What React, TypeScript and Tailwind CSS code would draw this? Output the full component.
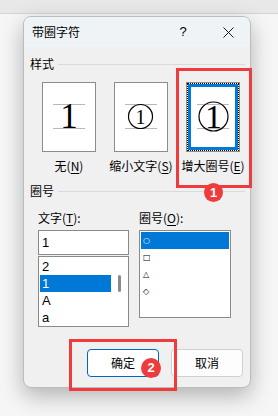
import React from "react";

const cjk = "font-['Microsoft_YaHei','Noto_Sans_CJK_SC',sans-serif]";

function U({ children }: { children: React.ReactNode }) {
  return <span className="underline underline-offset-2">{children}</span>;
}

function Preview({ kind, selected }: { kind: "none" | "small" | "big"; selected?: boolean }) {
  return (
    <div className="relative w-[54px] h-[70px] bg-white border border-[#8c8c8c]">
      {selected && (
        <div className="absolute inset-0 border border-dotted border-black">
          <div className="h-full w-full border-[3px] border-[#0078d7]" />
        </div>
      )}
      <svg
        className="absolute left-[-1px] top-[-1px]"
        width={54}
        height={70}
        viewBox="0 0 54 70"
      >
        <line x1={11} y1={22.5} x2={43} y2={22.5} stroke="#b8b8b8" strokeWidth={1} />
        <line x1={11} y1={46.5} x2={43} y2={46.5} stroke="#b8b8b8" strokeWidth={1} />
        {kind === "none" && (
          <text x={27} y={46} textAnchor="middle" fontSize={35} fontFamily="Liberation Serif, serif">
            1
          </text>
        )}
        {kind === "small" && (
          <>
            <circle cx={26.5} cy={34.5} r={12} fill="none" stroke="#000" strokeWidth={1.2} />
            <text x={26.5} y={41.5} textAnchor="middle" fontSize={20} fontFamily="Liberation Serif, serif">
              1
            </text>
          </>
        )}
        {kind === "big" && (
          <>
            <circle cx={27.5} cy={34.5} r={14.5} fill="none" stroke="#000" strokeWidth={1.2} />
            <text x={27.5} y={46} textAnchor="middle" fontSize={34} fontFamily="Liberation Serif, serif">
              1
            </text>
          </>
        )}
      </svg>
    </div>
  );
}

function Badge({ n, className }: { n: number; className: string }) {
  return (
    <div
      className={`absolute flex items-center justify-center rounded-full bg-[#ee3b3b] text-white font-bold text-[13px] font-['Liberation_Sans',sans-serif] ${className}`}
    >
      {n}
    </div>
  );
}

export default function App() {
  const chars = ["2", "1", "A", "a"];
  const rings = ["○", "□", "△", "◇"];

  return (
    <div className={`relative w-[278px] h-[416px] overflow-hidden bg-[#f6f6f6] text-black ${cjk}`}>
      <div className="h-[14px] bg-[#e8e8e8] border-b border-[#d4d4d4]" />

      {/* dialog */}
      <div className="ml-[23px] mt-[2px] w-[228px] h-[372px] rounded-[8px] border border-[#bcbcbc] bg-[#f0f0f0] shadow-[0_8px_22px_rgba(0,0,0,0.28)] overflow-hidden flex flex-col">
        <div className="h-[30px] shrink-0 bg-[#eef3f6] flex items-center pl-[8px] pr-[7px] text-[12px]">
          <span>带圈字符</span>
          <span className="ml-auto w-[30px] text-center text-[13px] font-['Liberation_Sans',sans-serif]">?</span>
          <span className="ml-[15px] w-[30px] flex justify-center">
            <svg width={11} height={11} viewBox="0 0 11 11">
              <path d="M0.5 0.5 L10.5 10.5 M10.5 0.5 L0.5 10.5" stroke="#1a1a1a" strokeWidth={1} />
            </svg>
          </span>
        </div>

        {/* 样式 */}
        <div className="mt-[9px] flex items-center pl-[6px] pr-[5px] text-[12px] leading-[16px]">
          <span>样式</span>
          <div className="ml-[4px] flex-1 border-t border-[#dadada]" />
        </div>
        <div className="mt-[10px] pl-[18px] flex gap-[18px] text-[12px]">
          <div className="w-[54px] flex flex-col items-center">
            <Preview kind="none" />
            <span className="mt-[6px] leading-[16px] whitespace-nowrap">
              无(<U>N</U>)
            </span>
          </div>
          <div className="w-[54px] flex flex-col items-center">
            <Preview kind="small" />
            <span className="mt-[6px] leading-[16px] whitespace-nowrap">
              缩小文字(<U>S</U>)
            </span>
          </div>
          <div className="w-[54px] flex flex-col items-center">
            <Preview kind="big" selected />
            <span className="mt-[6px] leading-[16px] whitespace-nowrap">
              增大圈号(<U>E</U>)
            </span>
          </div>
        </div>

        {/* 圈号 */}
        <div className="mt-[9px] flex items-center pl-[6px] pr-[5px] text-[12px] leading-[16px]">
          <span>圈号</span>
          <div className="ml-[4px] flex-1 border-t border-[#dadada]" />
        </div>

        <div className="mt-[11px] pl-[14px] flex gap-[10px] text-[12px]">
          <div className="w-[91px] flex flex-col">
            <span className="leading-[16px] whitespace-nowrap">
              文字(<U>T</U>):
            </span>
            <div className="mt-[4px] h-[25px] bg-white border border-[#8a8a8a] flex items-center pl-[3px] font-['Liberation_Sans',sans-serif] text-[13px]">
              1
            </div>
            <div className="mt-px h-[71px] bg-white border border-[#8a8a8a] flex overflow-hidden">
              <div className="w-[72px] pl-px pt-px flex flex-col font-['Liberation_Sans',sans-serif] text-[13px]">
                {chars.map((c) => (
                  <div
                    key={c}
                    className={`h-[17px] shrink-0 flex items-center pl-[2px] ${c === "1" ? "bg-[#0078d7] text-white" : ""}`}
                  >
                    {c}
                  </div>
                ))}
              </div>
              <div className="flex-1 flex justify-center pt-[18px]">
                <div className="w-[3px] h-[17px] rounded-full bg-[#8a8a8a]" />
              </div>
            </div>
          </div>

          <div className="w-[92px] flex flex-col">
            <span className="leading-[16px] whitespace-nowrap">
              圈号(<U>O</U>):
            </span>
            <div className="mt-[4px] h-[88px] bg-white border border-[#8a8a8a] p-px flex flex-col font-['DejaVu_Sans',sans-serif] text-[8px]">
              {rings.map((r, i) => (
                <div
                  key={r}
                  className={`h-[17px] shrink-0 flex items-center pl-[2px] ${i === 0 ? "bg-[#0078d7] text-white" : ""}`}
                >
                  {r}
                </div>
              ))}
            </div>
          </div>
        </div>

        <div className="mt-auto mb-[10px] pr-[7px] flex justify-end gap-[12px] text-[12px]">
          <button className="w-[72px] h-[28px] rounded-[4px] bg-white border border-[#0067c0]">确定</button>
          <button className="w-[72px] h-[28px] rounded-[4px] bg-[#fdfdfd] border border-[#d0d0d0]">取消</button>
        </div>
      </div>

      {/* annotations */}
      <div className="absolute left-[176px] top-[68px] w-[76px] h-[120px] border-[3px] border-[#ef3b3b]" />
      <Badge n={1} className="left-[204px] top-[183px] w-[19px] h-[19px]" />
      <div className="absolute left-[69px] top-[339px] w-[108px] h-[52px] border-[3px] border-[#ef3b3b]" />
      <Badge n={2} className="left-[141px] top-[358px] w-[20px] h-[20px]" />
    </div>
  );
}
